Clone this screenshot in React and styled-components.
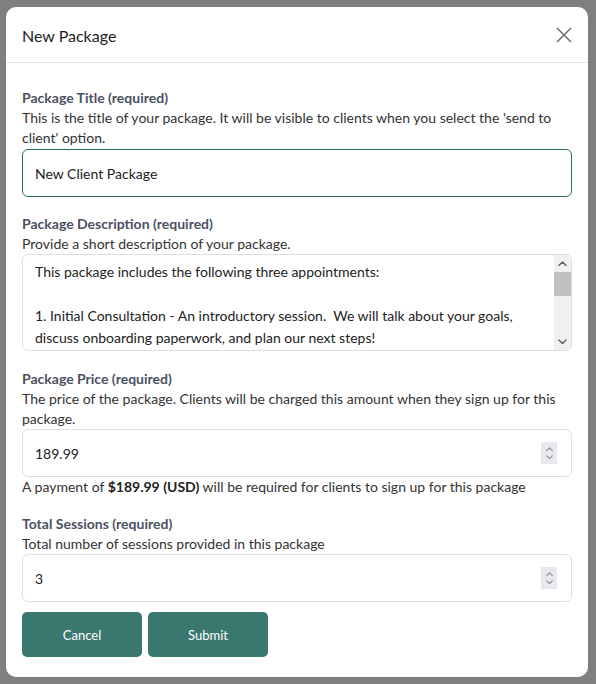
import React, { useEffect, useRef, useState } from 'react'
import styled, { createGlobalStyle } from 'styled-components'

const GlobalStyle = createGlobalStyle`
html,body{
    margin:0;
    padding:0;
    background:#7f7f7f;
}
body{
    font-family:Lato,"Open Sans","Liberation Sans",sans-serif;
    color:#333;
}
*{box-sizing:border-box;}
`

const Overlay = styled.div`
width:596px;
height:684px;
padding:7px 8px 7px 6px;
`

const Modal = styled.div`
background:#fff;
border-radius:10px;
width:582px;
height:670px;
display:flex;
flex-direction:column;
overflow:hidden;
`

const Header = styled.div`
height:56px;
flex-shrink:0;
display:flex;
align-items:center;
justify-content:space-between;
padding:0 14px 0 16px;
border-bottom:1px solid #e3e3e3;
h2{
    margin:0;
    font-size:16px;
    font-weight:400;
    color:#222;
    padding-top:1px;
}
`

const CloseButton = styled.button`
border:none;
background:none;
padding:0;
width:20px;
height:20px;
display:flex;
align-items:center;
justify-content:center;
cursor:pointer;
`

const Body = styled.form`
padding:25px 16px 20px 16px;
display:flex;
flex-direction:column;
`

const Field = styled.div`
display:flex;
flex-direction:column;
margin-bottom:${({gap})=>gap}px;
`

const Label = styled.div`
font-size:14px;
line-height:20px;
font-weight:700;
color:#4b5162;
`

const Hint = styled.div`
font-size:14px;
line-height:20px;
color:#333;
b{color:#222;}
`

const Box = styled.div`
border:1px solid ${({focused})=>focused?"#2d6a60":"#dedee3"};
border-radius:6px;
display:flex;
align-items:stretch;
background:#fff;
margin-top:${({top})=>top||0}px;
`

const TextInput = styled.input`
flex:1;
border:none;
outline:none;
background:transparent;
font-family:inherit;
font-size:14px;
color:#222;
padding:0 12px;
height:${({h})=>h}px;
caret-color:#111;
&::-webkit-inner-spin-button,
&::-webkit-outer-spin-button{
    -webkit-appearance:none;
    margin:0;
}
-moz-appearance:textfield;
`

const Spinner = styled.div`
width:16px;
height:22px;
background:#e8e8ee;
align-self:center;
margin-right:14px;
display:flex;
flex-direction:column;
align-items:center;
justify-content:center;
gap:3px;
`

const TextArea = styled.textarea`
flex:1;
border:none;
outline:none;
resize:none;
overflow:hidden;
font-family:inherit;
font-size:14px;
line-height:22px;
color:#222;
padding:6px 12px 4px 12px;
height:95px;
background:transparent;
`

const ScrollBar = styled.div`
width:17px;
background:#f0f0f0;
display:flex;
flex-direction:column;
border-radius:0 6px 6px 0;
`

const ScrollArrow = styled.div`
height:17px;
display:flex;
align-items:center;
justify-content:center;
`

const ScrollTrack = styled.div`
flex:1;
`

const Thumb = styled.div`
height:24px;
background:#c1c1c1;
`

const Actions = styled.div`
display:flex;
gap:6px;
margin-top:10px;
`

const Button = styled.button`
width:120px;
height:45px;
border:none;
border-radius:5px;
background:#3a786f;
color:#fff;
font-family:inherit;
font-size:13px;
cursor:pointer;
`

const Chevron = ({dir,color="#555",w=8}) => (
    <svg width={w} height={w/2+1} viewBox="0 0 10 6">
        <path d={dir==="up"?"M1 5 L5 1 L9 5":"M1 1 L5 5 L9 1"} fill="none" stroke={color} strokeWidth="1.6" strokeLinecap="round" strokeLinejoin="round"/>
    </svg>
)

const NumberField = ({value,onChange}) => (
    <Box>
        <TextInput type="number" h={46} value={value} onChange={onChange}/>
        <Spinner>
            <Chevron dir="up" color="#8a8a96" w={7}/>
            <Chevron dir="down" color="#8a8a96" w={7}/>
        </Spinner>
    </Box>
)

const description = `This package includes the following three appointments:

1. Initial Consultation - An introductory session.  We will talk about your goals, discuss onboarding paperwork, and plan our next steps!

2. Strategy Session - A deep dive into your current situation. We will review your progress and build a plan together.

3. Follow-up Session - We will check in on how things are going, answer your questions, and adjust the plan as needed.

Each session lasts about one hour and can be booked online at any time after sign up.`

const App = () => {
    const [form,setForm] = useState({
        title:"New Client Package",
        description,
        price:"189.99",
        sessions:"3",
    })
    const titleRef = useRef(null)

    useEffect(()=>{
        const el = titleRef.current
        if(!el) return
        el.focus()
        el.setSelectionRange(el.value.length,el.value.length)
    },[])

    const handleChange = (name) => (e) => {
        setForm((prev)=>({...prev,[name]:e.target.value}))
    }

  return (
    <>
      <GlobalStyle/>
      <Overlay>
        <Modal>
            <Header>
                <h2>New Package</h2>
                <CloseButton type="button" aria-label="close">
                    <svg width="16" height="16" viewBox="0 0 16 16">
                        <path d="M1 1 L15 15 M15 1 L1 15" stroke="#6f6f6f" strokeWidth="1.5"/>
                    </svg>
                </CloseButton>
            </Header>
            <Body onSubmit={(e)=>e.preventDefault()}>
                <Field gap={17}>
                    <Label>Package Title (required)</Label>
                    <Hint>This is the title of your package. It will be visible to clients when you select the 'send to client' option.</Hint>
                    <Box focused top={1}>
                        <TextInput ref={titleRef} h={46} value={form.title} onChange={handleChange("title")}/>
                    </Box>
                </Field>
                <Field gap={18}>
                    <Label>Package Description (required)</Label>
                    <Hint>Provide a short description of your package.</Hint>
                    <Box>
                        <TextArea value={form.description} onChange={handleChange("description")}/>
                        <ScrollBar>
                            <ScrollArrow><Chevron dir="up" color="#606060" w={9}/></ScrollArrow>
                            <ScrollTrack><Thumb/></ScrollTrack>
                            <ScrollArrow><Chevron dir="down" color="#606060" w={9}/></ScrollArrow>
                        </ScrollBar>
                    </Box>
                </Field>
                <Field gap={17}>
                    <Label>Package Price (required)</Label>
                    <Hint>The price of the package. Clients will be charged this amount when they sign up for this package.</Hint>
                    <NumberField value={form.price} onChange={handleChange("price")}/>
                    <Hint>A payment of <b>${form.price} (USD)</b> will be required for clients to sign up for this package</Hint>
                </Field>
                <Field gap={0}>
                    <Label>Total Sessions (required)</Label>
                    <Hint>Total number of sessions provided in this package</Hint>
                    <NumberField value={form.sessions} onChange={handleChange("sessions")}/>
                </Field>
                <Actions>
                    <Button type="button">Cancel</Button>
                    <Button type="submit">Submit</Button>
                </Actions>
            </Body>
        </Modal>
      </Overlay>
    </>
  )
}

export default App
